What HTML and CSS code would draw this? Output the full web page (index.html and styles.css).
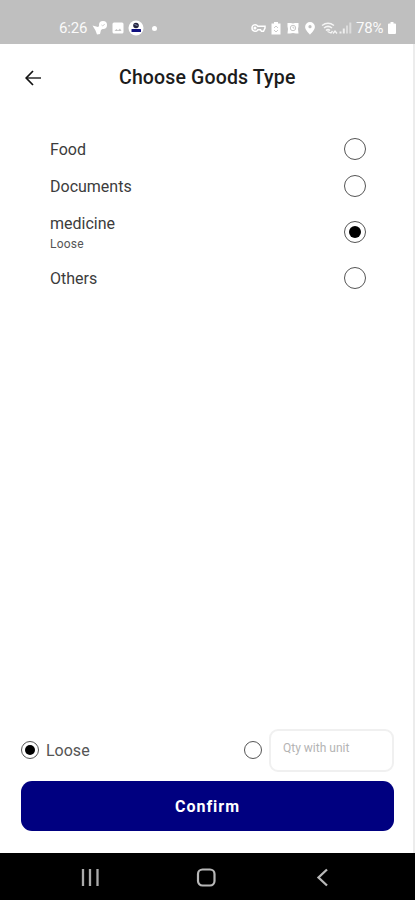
FILE: index.html
```html
<!DOCTYPE html>
<html lang="en">
<head>
<meta charset="utf-8">
<title>Choose Goods Type</title>
<link rel="stylesheet" href="styles.css">
</head>
<body>
<div class="screen">
  <div class="status">
    <div class="status-left">
      <span class="clock">6:26</span>
      <svg width="16" height="16" viewBox="0 0 16 16" fill="#fff"><path d="M.5 5.500L6 7l3-3 3 4-3 2-1 4-3 .5-1.500-4z"/><circle cx="11" cy="5" r="4"/><path d="M9.500 5l1.200 1 2-2" fill="none" stroke="#ccc"/></svg>
      <svg width="12" height="12" viewBox="0 0 12 12"><rect x=".5" y=".5" width="11" height="11" rx="1.500" fill="#fff"/><path d="M2.500 9l2-2 1.500 1.500L8 6.500 9.500 9z" fill="#c4c4c4"/></svg>
      <svg width="16" height="16" viewBox="0 0 16 16"><circle cx="8" cy="8" r="7.500" fill="#fff"/><circle cx="8" cy="5.500" r="2.800" fill="#26263f"/><path d="M6.500 4.500l3 1" stroke="#8892b5"/><rect x="3.500" y="9" width="9.500" height="3" rx=".5" fill="#101080"/></svg>
      <span class="dot"></span>
    </div>
    <div class="status-right">
      <svg width="15" height="10" viewBox="0 0 15 10" fill="none" stroke="#fff" stroke-width="1.500"><path d="M6.800 3.200C5 .5 1 1.700 1 5s4 4.500 5.800 1.800H9.500l1 1.500h2L14 5V3.200z"/><circle cx="4" cy="5" r=".8"/></svg>
      <svg class="saver" width="10" height="13" viewBox="0 0 10 13"><path d="M3 0h4v1.500h2.500v11h-9v-11H3z" fill="#fff"/><path d="M3 6l2-2 2 2M3 8l2 2 2-2" fill="none" stroke="#ccc"/></svg>
      <svg class="alarm" width="12" height="12" viewBox="0 0 12 12"><path d="M.5 1h3.500l2 .5L8 1h3.500v3.500L11 7l.5 4.500H9l-3-.5-3 .5H.5L1 7 .5 4.500z" fill="#fff"/><circle cx="6" cy="6" r="2.700" fill="none" stroke="#c8c8c8"/><path d="M6 4.500V6h1.500" fill="none" stroke="#bfbfbf" stroke-width=".8"/></svg>
      <svg class="pin" width="10" height="13" viewBox="0 0 10 13"><path d="M5 0a4.900 4.900 0 0 1 4.900 4.900C9.900 8 5 12.500 5 12.500S.1 8 .1 4.900A4.900 4.900 0 0 1 5 0z" fill="#fff"/><circle cx="5" cy="4.700" r="1.600" fill="#bfbfbf"/></svg>
      <svg class="wifi" width="17" height="13" viewBox="0 0 17 13" fill="none" stroke="#f5f5f5" stroke-width="1.500"><path d="M1 3.500q6-4.500 12 0M3 6q4-3.300 8 0M5 8.500q2-1.800 4 0"/><path d="M6.500 9.500L10 11l1.500-2M12 11.500l2-2.500 2 2.500" stroke-width="1.300"/></svg>
      <svg class="signal" width="13" height="12" viewBox="0 0 13 12" stroke-width="2"><path d="M1.500 11.500v-2M4.800 11.500v-5" stroke="#eee"/><path d="M8 11.500v-8M11.300 11.500V.5" stroke="#dcdcdc"/></svg>
      <span class="percent">78%</span>
      <svg width="8" height="12" viewBox="0 0 8 12" fill="#fff"><path d="M2.500 0h3v1.500H7q1 0 1 1V11q0 1-1 1H1q-1 0-1-1V2.500q0-1 1-1h1.500z"/></svg>
    </div>
  </div>

  <main class="page">
    <header class="header">
      <svg class="back" width="16" height="16" viewBox="0 0 16 16" fill="none" stroke-width="1.700"><path d="M2 8h14" stroke="#444"/><path d="M8 1L1.200 8 8 15" stroke="#111"/></svg>
      <h1 class="title">Choose Goods Type</h1>
    </header>

    <div class="list">
      <label class="row"><span class="name">Food</span><span class="radio"></span></label>
      <label class="row"><span class="name">Documents</span><span class="radio"></span></label>
      <label class="row tall"><span class="stack"><span class="name">medicine</span><span class="sub">Loose</span></span><span class="radio on"></span></label>
      <label class="row"><span class="name">Others</span><span class="radio"></span></label>
    </div>

    <footer class="footer">
      <div class="quantity">
        <span class="radio small on"></span>
        <span class="loose">Loose</span>
        <span class="radio small second"></span>
        <input class="qty" type="text" placeholder="Qty with unit">
      </div>
      <button class="confirm" type="button"><span>Confirm</span></button>
    </footer>
  </main>

  <nav class="nav">
    <svg width="20" height="20" viewBox="0 0 20 20" stroke="#aaa" stroke-width="2.300"><path d="M3 1v17M10 1v17M17.500 1v17"/></svg>
    <svg width="20" height="20" viewBox="0 0 20 20" fill="none" stroke="#b8b8b8" stroke-width="2.200"><rect x="2" y="1.500" width="16.500" height="16" rx="4.500"/></svg>
    <svg width="20" height="20" viewBox="0 0 20 20" fill="none" stroke="#b8b8b8" stroke-width="2.300"><path d="M15 1.500L6.500 9.500l8.500 8"/></svg>
  </nav>
</div>
</body>
</html>
```
FILE: styles.css
```css
* { box-sizing: border-box; }

body {
  margin: 0;
  font-family: Roboto, sans-serif;
  background: #fff;
}

svg { display: block; flex: none; }

.screen {
  width: 415px;
  height: 900px;
  display: flex;
  flex-direction: column;
  overflow: hidden;
}

.status {
  height: 44px;
  flex: none;
  padding: 12px 19px 0 59px;
  display: flex;
  justify-content: space-between;
  background: #bfbfbf;
  color: #fafafa;
}

.status-left, .status-right {
  display: flex;
  align-items: center;
  height: 32px;
}

.status-left { gap: 4px; }
.status-left .clock { width: 29px; font-size: 15px; letter-spacing: -.2px; }
.dot { width: 5px; height: 5px; margin-left: 4px; border-radius: 50%; background: #fff; }
.saver { margin-left: 5px; }
.alarm { margin-left: 6px; }
.pin { margin-left: 6px; }
.wifi { margin-left: 6px; }
.signal { margin-left: 1px; }
.percent { width: 29px; margin: 0 3px 0 4px; font-size: 15px; letter-spacing: -.2px; }

.page {
  flex: 1;
  display: flex;
  flex-direction: column;
  border-right: 2px solid #ececec;
}

.header {
  height: 67px;
  padding-left: 25px;
  display: flex;
  align-items: center;
}

.title {
  margin: 0 0 0 78px;
  font-size: 19.500px;
  font-weight: 500;
  line-height: 24px;
  letter-spacing: .15px;
  color: #1c1c1c;
  white-space: nowrap;
}

.list {
  padding: 19px 47px 0 50px;
}

.row {
  height: 37.500px;
  display: flex;
  align-items: center;
  justify-content: space-between;
}

.row.tall { height: 54px; }

.name {
  padding-top: 2px;
  font-size: 16px;
  line-height: 20px;
  color: #3c3c3c;
}

.stack { display: flex; flex-direction: column; padding-top: 2px; }
.stack .name { padding-top: 0; }

.sub {
  margin-top: 2px;
  font-size: 12px;
  line-height: 16px;
  letter-spacing: .2px;
  color: #555;
}

.radio {
  width: 22px;
  height: 22px;
  flex: none;
  display: flex;
  align-items: center;
  justify-content: center;
  border: 1.500px solid #555;
  border-radius: 50%;
}

.radio.on::after {
  content: "";
  width: 12px;
  height: 12px;
  border-radius: 50%;
  background: #000;
}

.radio.small { width: 18px; height: 18px; }
.radio.small.on::after { width: 10px; height: 10px; }

.footer {
  margin-top: auto;
  padding: 0 19px 22px 21px;
}

.quantity {
  height: 43px;
  padding-bottom: 1px;
  display: flex;
  align-items: center;
}

.loose {
  margin-left: 7px;
  font-size: 16px;
  color: #555;
}

.radio.second { margin-left: auto; }

.qty {
  width: 125px;
  height: 43px;
  margin-left: 7px;
  padding: 0 12px 4px;
  border: 2px solid #f0f0f0;
  border-radius: 9px;
  background: #fff;
  font: 12px Roboto, sans-serif;
  outline: 0;
}

.qty::placeholder { color: #b4b4b4; opacity: 1; }

.confirm {
  display: block;
  width: 373px;
  height: 50px;
  margin-top: 9px;
  padding: 0;
  border: 0;
  border-radius: 11px;
  background: #000080;
  color: #fff;
  font: 700 16px Roboto, sans-serif;
  letter-spacing: 1px;
}

.nav {
  height: 47px;
  flex: none;
  padding: 2px 83px 0 80px;
  display: flex;
  align-items: center;
  justify-content: space-between;
  background: #000;
}
```
